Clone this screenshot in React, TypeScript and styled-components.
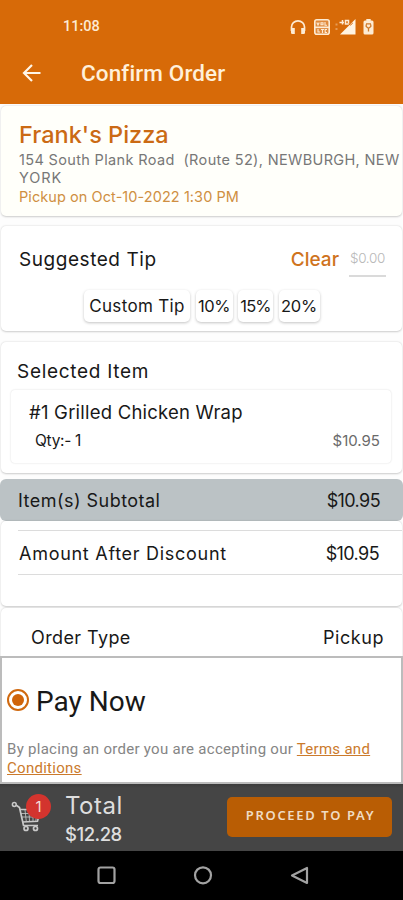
import React from "react";
import styled, { createGlobalStyle } from "styled-components";

const GlobalStyle = createGlobalStyle`
  * { box-sizing: border-box; }
  html, body { margin: 0; padding: 0; background: #fdfdfd; }
  body { font-family: Inter, "Open Sans", sans-serif; color: #161616; overflow: hidden; }
`;

const Screen = styled.div`
  width: 403px;
  height: 900px;
  display: flex;
  flex-direction: column;
  overflow: hidden;
`;

const Text = styled.span<{ $size: number; $gap?: number; $weight?: number; $color?: string }>`
  font-size: ${(p) => p.$size}px;
  letter-spacing: ${(p) => p.$gap ?? 0}px;
  font-weight: ${(p) => p.$weight ?? 400};
  color: ${(p) => p.$color ?? "#181818"};
  line-height: 18px;
  white-space: pre;
`;

const RobotoText = styled(Text)`
  font-family: Roboto, sans-serif;
`;

const Header = styled.header`
  height: 104px;
  flex: none;
  background: #d76a08;
`;

const StatusBar = styled.div`
  height: 54px;
  padding: 0 29px 0 63px;
  display: flex;
  align-items: center;
  justify-content: space-between;
`;

const StatusIcons = styled.div`
  display: flex;
  align-items: center;
  svg { display: block; }
`;

const AppBar = styled.div`
  height: 38px;
  padding-left: 22px;
  display: flex;
  align-items: center;
  gap: 39px;
  svg { display: block; }
`;

const Content = styled.main`
  height: 552px;
  flex: none;
  display: flex;
  flex-direction: column;
  overflow: hidden;
  padding: 2px 1px 0;
`;

const Card = styled.section<{ $height: number; $mt?: number; $bg?: string }>`
  height: ${(p) => p.$height}px;
  margin-top: ${(p) => p.$mt ?? 0}px;
  flex: none;
  display: flex;
  flex-direction: column;
  background: ${(p) => p.$bg ?? "#fff"};
  border-radius: 5px;
  box-shadow: 0 0.5px 2px rgba(0, 0, 0, 0.2);
`;

const Venue = styled(Card)`
  padding: 19px 0 0 18px;
`;

const VenueName = styled(Text)`
  line-height: 20px;
  margin-bottom: 6px;
`;

const PickupTime = styled(Text)`
  margin-top: 1px;
`;

const Row = styled.div<{ $height: number; $left: number; $right: number; $mt?: number }>`
  height: ${(p) => p.$height}px;
  margin-top: ${(p) => p.$mt ?? 0}px;
  padding: 0 ${(p) => p.$right}px 0 ${(p) => p.$left}px;
  display: flex;
  align-items: center;
  justify-content: space-between;
`;

const TipEntry = styled.div`
  display: flex;
  align-items: center;
  gap: 10px;
`;

const TipField = styled.div`
  width: 37px;
  height: 34px;
  padding-top: 6px;
  display: flex;
  justify-content: center;
  border-bottom: 2px solid #dadada;
`;

const TipChoices = styled.div`
  display: flex;
  gap: 5.5px;
  margin: 13px 0 0 83px;
`;

const TipButton = styled.button<{ $width: number }>`
  width: ${(p) => p.$width}px;
  height: 32px;
  padding: 0;
  border: 0;
  border-radius: 5px;
  background: #fff;
  display: flex;
  align-items: center;
  justify-content: center;
  font-family: inherit;
  box-shadow: 0 1px 3px rgba(0, 0, 0, 0.24);
`;

const ItemCard = styled.div`
  height: 73px;
  margin: 3px 11px 0 10px;
  padding-top: 12px;
  border-radius: 4px;
  background: #fff;
  box-shadow: 0 0 2px rgba(0, 0, 0, 0.16);
`;

const Subtotal = styled.div`
  height: 42px;
  flex: none;
  margin: 6px -1px 0;
  padding: 2px 23px 0 18px;
  display: flex;
  align-items: center;
  justify-content: space-between;
  border-radius: 6px;
  background: #bbc2c5;
`;

const Discount = styled.div`
  height: 45px;
  margin: 9px 0 0 17px;
  padding: 2px 23px 0 1px;
  display: flex;
  align-items: center;
  justify-content: space-between;
  border-top: 1px solid #dcdcdc;
  border-bottom: 1px solid #dcdcdc;
`;

const PayPanel = styled.section`
  height: 128px;
  flex: none;
  padding: 27px 0 0 5px;
  border: 2px solid #bcbcbc;
  background: #fff;
`;

const PayOption = styled.label`
  height: 34px;
  display: flex;
  align-items: center;
  gap: 7px;
`;

const Radio = styled.span`
  width: 22px;
  height: 22px;
  flex: none;
  margin-top: -4px;
  display: flex;
  align-items: center;
  justify-content: center;
  border: 2px solid #d0690f;
  border-radius: 50%;
  &::after {
    content: "";
    width: 12px;
    height: 12px;
    border-radius: 50%;
    background: #d0640a;
  }
`;

const Terms = styled.p`
  margin: 21px 0 0;
  font: 15px/18.5px Roboto, sans-serif;
  letter-spacing: 0.28px;
  color: #858585;
  white-space: pre;
  a {
    color: #cb7a2c;
    text-decoration: underline;
  }
`;

const Footer = styled.footer`
  height: 67px;
  flex: none;
  padding: 0 11px;
  display: flex;
  align-items: center;
  background: linear-gradient(#3c3c3c 0, #454545 4px);
`;

const CartWrap = styled.div`
  position: relative;
  width: 54px;
  height: 67px;
  svg { display: block; margin-top: 17px; }
`;

const CartBadge = styled.span`
  position: absolute;
  left: 15px;
  top: 10px;
  width: 25px;
  height: 25px;
  border-radius: 50%;
  background: #d3342e;
  color: #f3dcda;
  font-size: 15px;
  line-height: 25px;
  text-align: center;
`;

const Totals = styled.div`
  display: flex;
  flex-direction: column;
  gap: 10px;
  margin-top: 4px;
`;

const PayButton = styled.button`
  width: 165px;
  height: 40px;
  margin: 0 0 1px auto;
  padding: 0 0 5px 2px;
  border: 0;
  border-radius: 5px;
  background: #b95d04;
  display: flex;
  align-items: center;
  justify-content: center;
`;

const PayLabel = styled(Text)`
  font-family: "Noto Sans", sans-serif;
`;

const NavBar = styled.nav`
  height: 49px;
  flex: none;
  display: flex;
  justify-content: space-between;
  padding: 14px 93px 0 96px;
  background: #000;
`;

const HeadphonesIcon = () => (
  <svg width="16" height="16" viewBox="0 0 16 16">
    <path d="M1.500 12V8a6.500 6.200 0 0 1 13 0v4" fill="none" stroke="#fdebd3" strokeWidth="1.700" />
    <path d="M1 9h3.800v6H2.300A1.300 1.300 0 0 1 1 13.700zM15 9h-3.800v6h2.500a1.300 1.300 0 0 0 1.300-1.300z" fill="#fdebd3" />
  </svg>
);

const VolteIcon = () => (
  <svg width="16" height="16" viewBox="0 0 16 16">
    <rect x="0.800" y="0.800" width="14.400" height="14.400" rx="2" fill="#e08a3c" stroke="#fdebd3" strokeWidth="1.600" />
    <path d="M2.800 3.500l1.200 2.500 1.200-2.500M7 3.800h2v2H7zM11 3v3.300h2" fill="none" stroke="#fdebd3" strokeWidth="1.100" />
    <path d="M1 8.300h14" stroke="#fdebd3" strokeWidth="1.600" />
    <path d="M4 10v3h2M7 10.500h3M8.500 10.500V14M13 10.500h-1.800v3H13" fill="none" stroke="#fdebd3" strokeWidth="1.100" />
  </svg>
);

const SignalIcon = () => (
  <svg width="22" height="16" viewBox="0 0 22 16">
    <path d="M1.500 5.500h2M1.500 10h2" stroke="#e69a55" strokeWidth="2" />
    <path d="M21.500 0v15.500H6z" fill="#fff4e2" />
    <path d="M5.500 3.500h4.500M8.500 1v4.500M11.500 1.500h3v3.500h-3z" fill="none" stroke="#fdebd3" strokeWidth="1.500" />
    <path d="M14.600 5l2 1 2.200-2M16.500 1.200v1.500" fill="none" stroke="#d76a08" strokeWidth="1" />
  </svg>
);

const BatteryIcon = () => (
  <svg width="11" height="16" viewBox="0 0 11 16">
    <path d="M3.300 0h4.400v1.500H9A1.500 1.500 0 0 1 10.500 3v11A1.500 1.500 0 0 1 9 15.500H2A1.500 1.500 0 0 1 .5 14V3A1.500 1.500 0 0 1 2 1.500h1.300z" fill="#fdebd3" />
    <path d="M3 4.800h5M3.200 5.500v2l2.300 2 2.300-2v-2M5.500 9v3.500" fill="none" stroke="#cf7a2a" strokeWidth="1.300" />
  </svg>
);

const IconSlot = styled.span<{ $ml: number }>`
  margin-left: ${(p) => p.$ml}px;
`;

const BackIcon = () => (
  <svg width="20" height="18" viewBox="0 0 20 18">
    <path d="M18.500 9H2.500M10 1L2 9l8 8" fill="none" stroke="#fff6e8" strokeWidth="2.200" />
  </svg>
);

const CartIcon = () => (
  <svg width="32" height="34" viewBox="0 0 32 34" fill="none" stroke="#c9c9c9">
    <circle cx="3.300" cy="3.500" r="1.900" strokeWidth="1.500" />
    <path d="M5 4l3.500 2.500 4 18h14.500" strokeWidth="1.700" />
    <path d="M9 8.500h20.500l-3 11.800-15 .7" strokeWidth="1.600" />
    <path d="M14 9l1.300 11.500M18 9l.5 11.500M22 9v11.500M26 9l-1.200 11.500M10 12.500h19M11 16h17" strokeWidth=".8" />
    <circle cx="15" cy="27.500" r="2" strokeWidth="1.700" />
    <circle cx="24.500" cy="27.500" r="2" strokeWidth="1.700" />
  </svg>
);

const NavIcon = ({ d }: { d: string }) => (
  <svg width="21" height="21" viewBox="0 0 21 21" fill="none" stroke="#a2a2a2" strokeWidth="2.200" strokeLinejoin="round">
    <path d={d} />
  </svg>
);

const tips = [
  { label: "Custom Tip", width: 106, size: 17, gap: 0.35 },
  { label: "10%", width: 37, size: 16.5, gap: -0.5 },
  { label: "15%", width: 35, size: 16.5, gap: -0.8 },
  { label: "20%", width: 41, size: 16.5, gap: -0.2 },
];

export default function App() {
  return (
    <Screen>
      <GlobalStyle />
      <Header>
        <StatusBar>
          <RobotoText $size={14.5} $weight={500} $color="#fdebd3">11:08</RobotoText>
          <StatusIcons>
            <HeadphonesIcon />
            <IconSlot $ml={8}><VolteIcon /></IconSlot>
            <IconSlot $ml={4}><SignalIcon /></IconSlot>
            <IconSlot $ml={7}><BatteryIcon /></IconSlot>
          </StatusIcons>
        </StatusBar>
        <AppBar>
          <BackIcon />
          <RobotoText $size={22.5} $gap={0.12} $weight={500} $color="#fff0da">Confirm Order</RobotoText>
        </AppBar>
      </Header>

      <Content>
        <Venue $height={110} $bg="#fffffa">
          <VenueName $size={23.5} $weight={500} $color="#cb6a14">Frank's Pizza</VenueName>
          <Text $size={14.5} $gap={0.35} $color="#777">{"154 South Plank Road  (Route 52), NEWBURGH, NEW"}</Text>
          <Text $size={14.5} $gap={0.9} $color="#777">YORK</Text>
          <PickupTime $size={14.5} $gap={0.07} $color="#cf8f42">Pickup on Oct-10-2022 1:30 PM</PickupTime>
        </Venue>

        <Card $height={105} $mt={10}>
          <Row $height={34} $left={18} $right={16} $mt={17}>
            <Text $size={19} $gap={0.55}>Suggested Tip</Text>
            <TipEntry>
              <Text $size={19} $weight={500} $color="#cf731d">Clear</Text>
              <TipField>
                <Text $size={13.5} $gap={-0.3} $weight={300} $color="#b8b8b8">$0.00</Text>
              </TipField>
            </TipEntry>
          </Row>
          <TipChoices>
            {tips.map((t) => (
              <TipButton key={t.label} $width={t.width}>
                <Text $size={t.size} $gap={t.gap}>{t.label}</Text>
              </TipButton>
            ))}
          </TipChoices>
        </Card>

        <Card $height={131} $mt={11}>
          <Row $height={30} $left={16} $right={20} $mt={15}>
            <Text $size={19} $gap={0.7}>Selected Item</Text>
          </Row>
          <ItemCard>
            <Row $height={20} $left={18} $right={11}>
              <Text $size={18.5} $gap={0.22}>#1 Grilled Chicken Wrap</Text>
            </Row>
            <Row $height={20} $left={24} $right={11} $mt={9}>
              <Text $size={15.5} $gap={-0.3}>Qty:- 1</Text>
              <Text $size={15} $color="#6a6a6a">$10.95</Text>
            </Row>
          </ItemCard>
        </Card>

        <Subtotal>
          <Text $size={18} $gap={0.47}>Item(s) Subtotal</Text>
          <Text $size={18} $gap={-0.6}>$10.95</Text>
        </Subtotal>

        <Card $height={85}>
          <Discount>
            <Text $size={18} $gap={0.72}>Amount After Discount</Text>
            <Text $size={18} $gap={-0.6}>$10.95</Text>
          </Discount>
        </Card>

        <Card $height={60} $mt={2}>
          <Row $height={24} $left={30} $right={18} $mt={18}>
            <Text $size={18} $gap={0.4}>Order Type</Text>
            <Text $size={18} $gap={0.55}>Pickup</Text>
          </Row>
        </Card>
      </Content>

      <PayPanel>
        <PayOption>
          <Radio />
          <RobotoText $size={28}>Pay Now</RobotoText>
        </PayOption>
        <Terms>
          By placing an order you are accepting our <a>Terms and{"\n"}Conditions</a>
        </Terms>
      </PayPanel>

      <Footer>
        <CartWrap>
          <CartIcon />
          <CartBadge>1</CartBadge>
        </CartWrap>
        <Totals>
          <Text $size={24} $gap={0.5} $color="#dedede">Total</Text>
          <Text $size={18.5} $gap={-0.5} $weight={500} $color="#dedede">$12.28</Text>
        </Totals>
        <PayButton>
          <PayLabel $size={13} $gap={1.65} $weight={600} $color="#f0dcc4">PROCEED TO PAY</PayLabel>
        </PayButton>
      </Footer>

      <NavBar>
        <NavIcon d="M4.500 2.500h12a2 2 0 0 1 2 2v11.500a2 2 0 0 1-2 2h-12a2 2 0 0 1-2-2V4.500a2 2 0 0 1 2-2z" />
        <NavIcon d="M10 2.300a8 8 0 1 1 0 16a8 8 0 1 1 0-16z" />
        <NavIcon d="M18 3v15L3 10.500z" />
      </NavBar>
    </Screen>
  );
}
